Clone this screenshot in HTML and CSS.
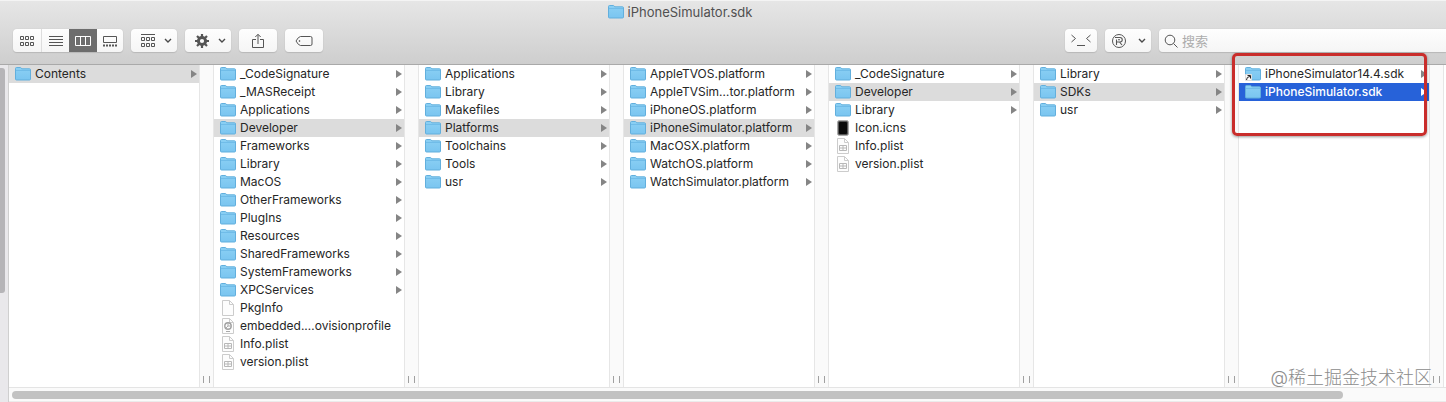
FILE: index.html
```html
<!DOCTYPE html>
<html lang="zh-CN">
<head>
<meta charset="utf-8">
<title>iPhoneSimulator.sdk</title>
<link rel="stylesheet" href="styles.css">
</head>
<body>
<svg class="sprite" aria-hidden="true">
  <defs>
    <linearGradient id="blue" x1="0" y1="0" x2="0" y2="1"><stop offset="0" stop-color="#8bd0f4"/><stop offset="1" stop-color="#7ac5f0"/></linearGradient>
  </defs>
  <symbol id="folder" viewBox="0 0 16 16"><path d="M.5 2.5q0-1 1-1h3.800q.6 0 1 .5l.5.8h7.700q1 0 1 1V13q0 1-1 1h-13q-1 0-1-1z" fill="url(#blue)" stroke="#62afdd"/><path d="M1 4.500h14" stroke="#70bce8" fill="none"/></symbol>
  <symbol id="alias" viewBox="0 0 16 16"><use href="#folder"/><path d="M.5 8.500h6v6h-6z" fill="#fff" stroke="#ddd"/><path d="M1.500 14Q1.500 10.500 5 10.500M2.500 9.500H5.500V12.500" fill="none" stroke="#222"/></symbol>
  <symbol id="file" viewBox="0 0 16 16"><path d="M2.500.5h7l4 4v11h-11z" fill="#fdfdfd" stroke="#ccc"/><path d="M9.500.5v4h4" fill="none" stroke="#ccc"/></symbol>
  <symbol id="plist" viewBox="0 0 16 16"><use href="#file"/><path d="M4.500 7.500h7v5h-7zM4.500 10h7M8 7.500v5" fill="none" stroke="#b8b8b8"/></symbol>
  <symbol id="profile" viewBox="0 0 16 16"><use href="#file"/><circle cx="8" cy="8" r="3.200" fill="none" stroke="#a0a0a0" stroke-width="1.400"/><path d="M8 5v3h3M8 8l-2 2M6 13.500h4" fill="none" stroke="#aaa"/></symbol>
  <symbol id="icns" viewBox="0 0 16 16"><rect x="2.500" y=".5" width="11" height="15" rx="2" fill="#555" stroke="#aaa"/><rect x="4" y="2" width="8" height="12" rx="1" fill="#0a0a0a"/></symbol>
  <symbol id="chevron" viewBox="0 0 8 6"><path d="M1 1l3 3 3-3" fill="none" stroke="#4a4a4a" stroke-width="1.400"/></symbol>
</svg>

<header class="header">
  <h1 class="title"><svg class="icon"><use href="#folder"/></svg>iPhoneSimulator.sdk</h1>
  <div class="toolbar">
    <div class="views">
      <button class="view" aria-label="Icons"><svg width="16" height="12" class="line"><path d="M1.500 1.500h3v3h-3zM6.500 1.500h3v3h-3zM11.500 1.500h3v3h-3zM1.500 7.500h3v3h-3zM6.500 7.500h3v3h-3zM11.500 7.500h3v3h-3z"/></svg></button>
      <button class="view" aria-label="List"><svg width="14" height="12" class="line"><path d="M0 1.500h14M0 4.500h14M0 7.500h14M0 10.500h14"/></svg></button>
      <button class="view active" aria-label="Columns"><svg width="16" height="12" class="line"><path d="M.5 1.500h15v9H.5zM5.500 1.500v9M10.500 1.500v9"/></svg></button>
      <button class="view" aria-label="Gallery"><svg width="14" height="12" class="line"><path d="M.5 1.500h13v6H.5z"/><path d="M0 10.500h14" stroke-width="2" stroke-dasharray="2 1"/></svg></button>
    </div>
    <button class="tool menu" aria-label="Group"><svg width="16" height="14" class="line"><path d="M1 .5h14M1.500 3.500h3v3h-3zM6.500 3.500h3v3h-3zM11.500 3.500h3v3h-3zM1.500 9.500h3v3h-3zM6.500 9.500h3v3h-3zM11.500 9.500h3v3h-3z"/></svg><svg class="chevron"><use href="#chevron"/></svg></button>
    <button class="tool menu" aria-label="Actions"><svg width="16" height="14" viewBox="0 0 16 14"><circle cx="8" cy="7" r="3.600" fill="none" stroke="#555" stroke-width="3"/><path d="M8 0v3M8 11v3M1 7h3M12 7h3M3 2l2 2M11 10l2 2M3 12l2-2M11 4l2-2" stroke="#555" stroke-width="2.200"/></svg><svg class="chevron"><use href="#chevron"/></svg></button>
    <button class="tool" aria-label="Share"><svg width="14" height="16" class="line"><path d="M5 6.500H1.500v8h11v-8H9M7 11V1.500M4.300 4L7 1.300 9.700 4"/></svg></button>
    <button class="tool" aria-label="Tags"><svg width="18" height="12" class="line"><path d="M5.500 1.500h10q1.500 0 1.500 1.500v6q0 1.500-1.500 1.500h-10Q3.500 10.500 1 6 3.500 1.500 5.500 1.500z"/><circle cx="4.500" cy="6" r=".5"/></svg></button>
    <button class="tool terminal" aria-label="Terminal"><svg width="20" height="14" class="line"><path d="M.5 1l4 3.500-4 3.500M19.500 1l-4 3.500 4 3.500M6 11.500h8"/></svg></button>
    <button class="tool menu record" aria-label="R"><svg width="16" height="16" class="line"><circle cx="8" cy="8" r="6.500"/><path d="M5.500 12V6.500M4 4.500h5a2 2 0 0 1 0 4.500H5.500M8.500 9l2.500 3M7 6.800h2" stroke-width="1.100"/></svg><svg class="chevron"><use href="#chevron"/></svg></button>
    <label class="search"><svg width="14" height="14" class="line"><circle cx="6" cy="6" r="4.800"/><path d="M9.500 9.500l4 4"/></svg><input type="search" placeholder="搜索" aria-label="搜索"></label>
  </div>
</header>

<main class="browser">
  <div class="sidebar"><div class="sidebar-thumb"></div></div>
  <div class="content">
    <div class="columns">
      <section class="column">
        <ul class="list">
          <li class="row dir open"><svg class="icon"><use href="#folder"/></svg>Contents</li>
        </ul>
        <div class="gutter"></div>
      </section>
      <section class="column">
        <ul class="list">
          <li class="row dir"><svg class="icon"><use href="#folder"/></svg>_CodeSignature</li>
          <li class="row dir"><svg class="icon"><use href="#folder"/></svg>_MASReceipt</li>
          <li class="row dir"><svg class="icon"><use href="#folder"/></svg>Applications</li>
          <li class="row dir open"><svg class="icon"><use href="#folder"/></svg>Developer</li>
          <li class="row dir"><svg class="icon"><use href="#folder"/></svg>Frameworks</li>
          <li class="row dir"><svg class="icon"><use href="#folder"/></svg>Library</li>
          <li class="row dir"><svg class="icon"><use href="#folder"/></svg>MacOS</li>
          <li class="row dir"><svg class="icon"><use href="#folder"/></svg>OtherFrameworks</li>
          <li class="row dir"><svg class="icon"><use href="#folder"/></svg>PlugIns</li>
          <li class="row dir"><svg class="icon"><use href="#folder"/></svg>Resources</li>
          <li class="row dir"><svg class="icon"><use href="#folder"/></svg>SharedFrameworks</li>
          <li class="row dir"><svg class="icon"><use href="#folder"/></svg>SystemFrameworks</li>
          <li class="row dir"><svg class="icon"><use href="#folder"/></svg>XPCServices</li>
          <li class="row"><svg class="icon"><use href="#file"/></svg>PkgInfo</li>
          <li class="row"><svg class="icon"><use href="#profile"/></svg>embedded.…ovisionprofile</li>
          <li class="row"><svg class="icon"><use href="#plist"/></svg>Info.plist</li>
          <li class="row"><svg class="icon"><use href="#plist"/></svg>version.plist</li>
        </ul>
        <div class="gutter"></div>
      </section>
      <section class="column">
        <ul class="list">
          <li class="row dir"><svg class="icon"><use href="#folder"/></svg>Applications</li>
          <li class="row dir"><svg class="icon"><use href="#folder"/></svg>Library</li>
          <li class="row dir"><svg class="icon"><use href="#folder"/></svg>Makefiles</li>
          <li class="row dir open"><svg class="icon"><use href="#folder"/></svg>Platforms</li>
          <li class="row dir"><svg class="icon"><use href="#folder"/></svg>Toolchains</li>
          <li class="row dir"><svg class="icon"><use href="#folder"/></svg>Tools</li>
          <li class="row dir"><svg class="icon"><use href="#folder"/></svg>usr</li>
        </ul>
        <div class="gutter"></div>
      </section>
      <section class="column">
        <ul class="list">
          <li class="row dir"><svg class="icon"><use href="#folder"/></svg>AppleTVOS.platform</li>
          <li class="row dir"><svg class="icon"><use href="#folder"/></svg>AppleTVSim…tor.platform</li>
          <li class="row dir"><svg class="icon"><use href="#folder"/></svg>iPhoneOS.platform</li>
          <li class="row dir open"><svg class="icon"><use href="#folder"/></svg>iPhoneSimulator.platform</li>
          <li class="row dir"><svg class="icon"><use href="#folder"/></svg>MacOSX.platform</li>
          <li class="row dir"><svg class="icon"><use href="#folder"/></svg>WatchOS.platform</li>
          <li class="row dir"><svg class="icon"><use href="#folder"/></svg>WatchSimulator.platform</li>
        </ul>
        <div class="gutter"></div>
      </section>
      <section class="column">
        <ul class="list">
          <li class="row dir"><svg class="icon"><use href="#folder"/></svg>_CodeSignature</li>
          <li class="row dir open"><svg class="icon"><use href="#folder"/></svg>Developer</li>
          <li class="row dir"><svg class="icon"><use href="#folder"/></svg>Library</li>
          <li class="row"><svg class="icon"><use href="#icns"/></svg>Icon.icns</li>
          <li class="row"><svg class="icon"><use href="#plist"/></svg>Info.plist</li>
          <li class="row"><svg class="icon"><use href="#plist"/></svg>version.plist</li>
        </ul>
        <div class="gutter"></div>
      </section>
      <section class="column">
        <ul class="list">
          <li class="row dir"><svg class="icon"><use href="#folder"/></svg>Library</li>
          <li class="row dir open"><svg class="icon"><use href="#folder"/></svg>SDKs</li>
          <li class="row dir"><svg class="icon"><use href="#folder"/></svg>usr</li>
        </ul>
        <div class="gutter"></div>
      </section>
      <section class="column">
        <ul class="list">
          <li class="row dir"><svg class="icon"><use href="#alias"/></svg>iPhoneSimulator14.4.sdk</li>
          <li class="row dir selected"><svg class="icon"><use href="#folder"/></svg>iPhoneSimulator.sdk</li>
        </ul>
        <div class="gutter"></div>
        <div class="callout"></div>
      </section>
    </div>
    <div class="scrollbar"><div class="scroll-thumb"></div></div>
    <p class="watermark">@稀土掘金技术社区</p>
  </div>
</main>
</body>
</html>
```
FILE: styles.css
```css
* { box-sizing: border-box; }

body {
  margin: 0;
  min-height: 100vh;
  display: flex;
  flex-direction: column;
  background: #fff;
  color: #262626;
  font: 12px/18px Inter, "Noto Sans CJK SC", sans-serif;
}

.sprite { position: absolute; width: 0; height: 0; }
.icon { width: 16px; height: 16px; flex: none; }
.line { fill: none; stroke: #555; }

.header {
  padding-top: 2px;
  border-top: 1px solid #f4f4f4;
  border-bottom: 1px solid #a9a9a9;
  background: linear-gradient(#e6e6e6, #cecece);
}

.title {
  margin: 0;
  padding-right: 86px;
  display: flex;
  align-items: center;
  justify-content: center;
  gap: 4px;
  font-size: 13px;
  font-weight: 400;
  color: #505050;
}

.toolbar {
  display: flex;
  gap: 8px;
  padding: 8px 0 12px 13px;
}

button {
  font: inherit;
  border: 0;
  padding: 0;
}

.views, .tool, .search {
  height: 23px;
  border-radius: 4px;
  background: linear-gradient(#fefefe, #f5f5f5);
  box-shadow: 0 0 1px #bbb, 0 1px 1px #b8b8b8;
}

.views { display: flex; overflow: hidden; }

.view {
  width: 28px;
  display: flex;
  align-items: center;
  justify-content: center;
  background: transparent;
}
.view + .view { border-left: 1px solid #ddd; }
.view.active { width: 27px; background: #6d6d6d; }
.view.active + .view, .view + .view.active { width: 27px; border-color: #6d6d6d; }
.view.active .line { stroke: #fff; }

.tool {
  width: 38px;
  display: flex;
  align-items: center;
  justify-content: center;
}
.tool.menu { width: 46px; justify-content: space-between; padding: 0 5px 0 9px; }
.tool.menu.record { padding-left: 6px; }
.tool.terminal { width: 32px; margin-left: auto; }
.chevron { width: 8px; height: 6px; }

.search {
  width: 287px;
  display: flex;
  align-items: center;
  gap: 4px;
  padding-left: 5px;
  border-radius: 4px 0 0 4px;
}
.search input {
  flex: 1;
  min-width: 0;
  padding: 0;
  border: 0;
  outline: 0;
  background: transparent;
  font: inherit;
  font-size: 13px;
}
.search input::placeholder { color: #acacac; }

.browser { flex: 1; display: flex; }

.sidebar {
  width: 9px;
  flex: none;
  padding-top: 3px;
  border-right: 1px solid #cfcfcf;
  background: #e9e8eb;
}
.sidebar-thumb {
  width: 5px;
  height: 225px;
  border-radius: 0 3px 3px 0;
  background: #b5b4b7;
}

.content {
  position: relative;
  flex: 1;
  min-width: 0;
  display: flex;
  flex-direction: column;
}

.columns { flex: 1; display: flex; }
.column { position: relative; width: 205px; flex: none; display: flex; }
.list { flex: 1; margin: 0; padding: 0; list-style: none; }

.row {
  display: flex;
  align-items: center;
  gap: 4px;
  padding: 0 2px 0 6px;
  white-space: nowrap;
}
.row.dir::after {
  content: "";
  margin-left: auto;
  border: 4px solid transparent;
  border-left: 6px solid #858585;
  border-right: 0;
}
.row.open { background: #dcdcdc; }
.row.selected { background: #2762d9; color: #fff; font-weight: 500; }
.row.selected::after { border-left-color: #fff; }

.gutter {
  width: 15px;
  display: flex;
  align-items: flex-end;
  justify-content: center;
  padding-bottom: 4px;
  border: solid #e6e6e6;
  border-width: 0 1px;
  background: #fafafa;
}
.gutter::after {
  content: "";
  width: 5px;
  height: 7px;
  border: solid #a0a0a0;
  border-width: 0 1px;
}

.callout {
  position: absolute;
  top: -12px;
  left: -7px;
  right: 17px;
  height: 83px;
  border: 3px solid #c92d2b;
  border-radius: 5px;
  box-shadow: 0 1px 3px #0006;
}

.scrollbar {
  height: 15px;
  padding: 3px 103px 0 3px;
  border-top: 1px solid #e4e4e4;
  border-bottom: 1px solid #ebebeb;
  background: #fafafa;
}
.scroll-thumb { height: 8px; border-radius: 4px; background: #c2c2c2; }

.watermark {
  position: absolute;
  right: 14px;
  bottom: 14px;
  margin: 0;
  font-size: 18px;
  line-height: 20px;
  font-weight: 300;
  color: #8c8c8c;
}
```
